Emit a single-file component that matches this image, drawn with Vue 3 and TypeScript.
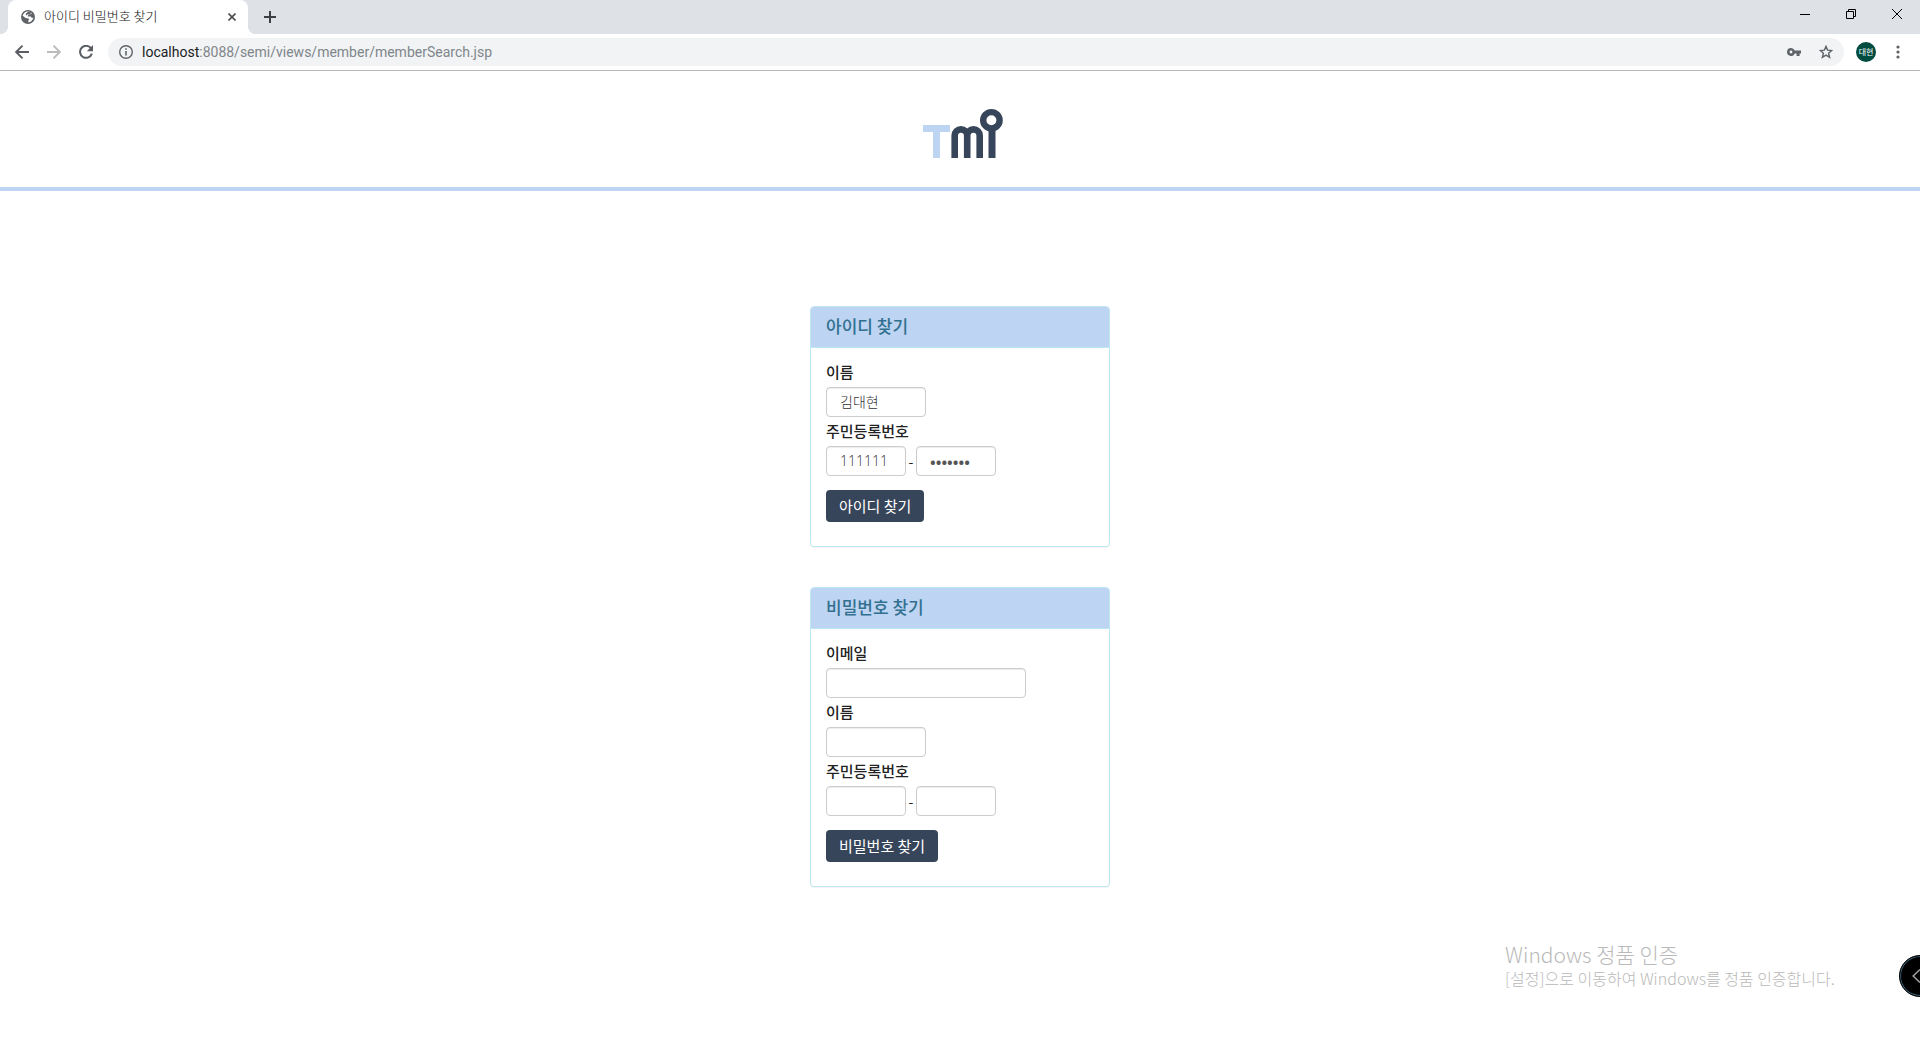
<script setup lang="ts">
import { ref } from 'vue'

const idForm = ref({ name: '김대현', front: '111111', back: '1111111' })
const pwForm = ref({ email: '', name: '', front: '', back: '' })
</script>

<template>
  <div class="window">
    <div class="tabstrip">
      <div class="tab">
        <svg class="globe" viewBox="0 0 14 14" aria-hidden="true">
          <circle cx="7" cy="7" r="7" fill="#5f6368" />
          <path d="M7.6 1.6C9 1.8 10 2.4 10.8 3.2L9.6 4.2L7.2 4.6L6.8 6.4L9.8 6.6L11 8.2L12.4 7.2C12.2 9.6 10.4 12 7.6 12.4L7.2 10.6L8.4 9.4L7.4 8.4L4.6 8L1.7 5.8C2.2 3.6 4 2 6 1.6Z" fill="#fff" />
          <path d="M1.6 7.4L4.6 9.4L5.2 12C3.2 11.4 1.8 9.6 1.6 7.4Z" fill="#5f6368" />
          <path d="M5.2 3.2L7.6 1.4L10.6 2.6L8.8 4.2L6.6 4.2L5.8 5.6L4.6 4.6Z" fill="#5f6368" />
        </svg>
        <span class="tab-title">아이디 비밀번호 찾기</span>
        <button class="icon-btn tab-close" type="button" aria-label="탭 닫기">
          <svg width="8" height="8" viewBox="0 0 8 8"><path d="M0.5 0.5L7.5 7.5M7.5 0.5L0.5 7.5" stroke="#4a4d51" stroke-width="1.6" /></svg>
        </button>
      </div>
      <button class="icon-btn new-tab" type="button" aria-label="새 탭">
        <svg width="12" height="12" viewBox="0 0 12 12"><path d="M6 0V12M0 6H12" stroke="#3c4043" stroke-width="2" /></svg>
      </button>
      <div class="win-controls">
        <button class="icon-btn win-btn" type="button" aria-label="최소화">
          <svg width="10" height="10" viewBox="0 0 10 10"><path d="M0 5.5H10" stroke="#000" /></svg>
        </button>
        <button class="icon-btn win-btn" type="button" aria-label="이전 크기로">
          <svg width="10" height="10" viewBox="0 0 10 10"><path d="M0.5 2.5H7.5V9.5H0.5ZM2.5 2.5V0.5H9.5V7.5H7.5" fill="none" stroke="#000" /></svg>
        </button>
        <button class="icon-btn win-btn" type="button" aria-label="닫기">
          <svg width="10" height="10" viewBox="0 0 10 10"><path d="M0 0L10 10M10 0L0 10" stroke="#000" /></svg>
        </button>
      </div>
    </div>

    <div class="toolbar">
      <button class="icon-btn tool" type="button" aria-label="뒤로">
        <svg width="14" height="14" viewBox="0 0 14 14"><path d="M14 7H1.5M7.5 0.7L1.2 7L7.5 13.3" fill="none" stroke="#5a5e63" stroke-width="1.9" /></svg>
      </button>
      <button class="icon-btn tool" type="button" aria-label="앞으로">
        <svg width="14" height="14" viewBox="0 0 14 14"><path d="M0 7H12.5M6.5 0.7L12.8 7L6.5 13.3" fill="none" stroke="#babcbe" stroke-width="1.9" /></svg>
      </button>
      <button class="icon-btn tool" type="button" aria-label="새로고침">
        <svg width="14" height="14" viewBox="0 0 14 14"><path d="M12 3.4A6 6 0 1 0 12.8 8.6" fill="none" stroke="#5a5e63" stroke-width="2" /><path d="M14 0V6.2H7.8Z" fill="#5a5e63" /></svg>
      </button>
      <div class="omnibox">
        <svg width="16" height="16" viewBox="0 0 16 16" aria-hidden="true">
          <circle cx="8" cy="8" r="6.3" fill="none" stroke="#5f6368" stroke-width="1.4" />
          <path d="M8 7V11.6M8 4.2V5.8" stroke="#5f6368" stroke-width="1.6" />
        </svg>
        <span class="url"><span class="host">localhost</span>:8088/semi/views/member/memberSearch.jsp</span>
        <button class="icon-btn tool" type="button" aria-label="비밀번호 관리">
          <svg width="14" height="8" viewBox="0 0 14 8"><path fill-rule="evenodd" d="M4 0A4 4 0 1 0 7.7 5.5H9.6V8H12.6V5.5H14V2.5H7.7A4 4 0 0 0 4 0ZM4 2.6A1.4 1.4 0 1 1 4 5.4A1.4 1.4 0 1 1 4 2.6Z" fill="#5f6368" /></svg>
        </button>
        <button class="icon-btn tool" type="button" aria-label="북마크">
          <svg width="14" height="14" viewBox="0 0 14 14"><path d="M7 1.4L8.6 5.1L12.7 5.5L9.6 8.2L10.6 12.3L7 10.1L3.4 12.3L4.4 8.2L1.3 5.5L5.4 5.1Z" fill="none" stroke="#5f6368" stroke-width="1.4" /></svg>
        </button>
      </div>
      <button class="icon-btn tool" type="button" aria-label="프로필"><span class="avatar">대현</span></button>
      <button class="icon-btn tool" type="button" aria-label="메뉴">
        <svg width="4" height="14" viewBox="0 0 4 14"><circle cx="2" cy="2" r="1.6" fill="#5f6368" /><circle cx="2" cy="7" r="1.6" fill="#5f6368" /><circle cx="2" cy="12" r="1.6" fill="#5f6368" /></svg>
      </button>
    </div>

    <header class="site-header">
      <svg class="logo" viewBox="0 0 86 50" role="img" aria-label="Tmi">
        <path d="M6 17H33V24H23V50H16V24H6Z" fill="#bdd4f2" />
        <path d="M37.7 50V27.6A6.25 6.25 0 0 1 50.2 27.6V50M50.2 27.6A6.25 6.25 0 0 1 62.7 27.6V50" fill="none" stroke="#37455a" stroke-width="6.6" />
        <path d="M75 22V50" stroke="#37455a" stroke-width="7" />
        <circle cx="74.4" cy="12.3" r="8.2" fill="#fff" stroke="#37455a" stroke-width="6.4" />
      </svg>
    </header>

    <main class="content">
      <section class="card">
        <h3 class="card-title">아이디 찾기</h3>
        <form class="card-body" @submit.prevent>
          <div class="field">
            <label for="id-name">이름</label>
            <input id="id-name" v-model="idForm.name" class="name" type="text">
          </div>
          <div class="field">
            <label for="id-front">주민등록번호</label>
            <div class="pair">
              <input id="id-front" v-model="idForm.front" class="part" type="text">
              <span class="dash">-</span>
              <input v-model="idForm.back" class="part" type="password" aria-label="주민등록번호 뒷자리">
            </div>
          </div>
          <button class="submit" type="submit">아이디 찾기</button>
        </form>
      </section>

      <section class="card">
        <h3 class="card-title">비밀번호 찾기</h3>
        <form class="card-body" @submit.prevent>
          <div class="field">
            <label for="pw-email">이메일</label>
            <input id="pw-email" v-model="pwForm.email" class="email" type="text">
          </div>
          <div class="field">
            <label for="pw-name">이름</label>
            <input id="pw-name" v-model="pwForm.name" class="name" type="text">
          </div>
          <div class="field">
            <label for="pw-front">주민등록번호</label>
            <div class="pair">
              <input id="pw-front" v-model="pwForm.front" class="part" type="text">
              <span class="dash">-</span>
              <input v-model="pwForm.back" class="part" type="password" aria-label="주민등록번호 뒷자리">
            </div>
          </div>
          <button class="submit" type="submit">비밀번호 찾기</button>
        </form>
      </section>
    </main>

    <aside class="activation">
      <p class="activation-title">Windows 정품 인증</p>
      <p class="activation-text">[설정]으로 이동하여 Windows를 정품 인증합니다.</p>
    </aside>
    <button class="side-handle" type="button" aria-label="패널 열기">
      <svg width="8" height="14" viewBox="0 0 8 14"><path d="M8 0.5L1.2 7L8 13.5" fill="none" stroke="#9a9a9a" stroke-width="1.6" /></svg>
    </button>
  </div>
</template>

<style>
body {
  margin: 0;
  background: #fff;
}
</style>

<style scoped>
.window {
  position: relative;
  min-height: 100vh;
  overflow: hidden;
  font-family: "Noto Sans CJK KR", sans-serif;
  color: #222;
}

.icon-btn {
  display: flex;
  align-items: center;
  justify-content: center;
  flex: none;
  padding: 0;
  border: 0;
  background: none;
}

.tabstrip {
  display: flex;
  align-items: flex-start;
  height: 34px;
  padding-left: 8px;
  background: #dee1e6;
}

.tab {
  position: relative;
  display: flex;
  align-items: center;
  box-sizing: border-box;
  width: 240px;
  height: 34px;
  padding: 0 8px 0 13px;
  border-radius: 8px 8px 0 0;
  background: #fff;
}

.tab::before,
.tab::after {
  content: "";
  position: absolute;
  bottom: 0;
  width: 8px;
  height: 8px;
}

.tab::before {
  right: 100%;
  background: radial-gradient(circle at 0 0, transparent 8px, #fff 8px);
}

.tab::after {
  left: 100%;
  background: radial-gradient(circle at 100% 0, transparent 8px, #fff 8px);
}

.globe {
  flex: none;
  width: 14px;
  height: 14px;
}

.tab-title {
  flex: 1;
  margin-left: 9px;
  padding-bottom: 2px;
  font-size: 13px;
  line-height: 18px;
  font-weight: 300;
  color: #111;
  white-space: nowrap;
}

.tab-close {
  width: 16px;
  height: 16px;
}

.new-tab {
  width: 28px;
  height: 34px;
  margin-left: 8px;
}

.win-controls {
  display: flex;
  margin-left: auto;
}

.win-btn {
  width: 46px;
  height: 28px;
}

.toolbar {
  display: flex;
  align-items: center;
  height: 36px;
  padding: 0 6px;
  border-bottom: 1px solid #b6b6b6;
}

.tool {
  width: 32px;
  height: 28px;
}

.omnibox {
  display: flex;
  flex: 1;
  align-items: center;
  height: 28px;
  margin: 0 6px;
  padding: 0 2px 0 10px;
  border-radius: 14px;
  background: #f1f3f4;
}

.url {
  flex: 1;
  margin-left: 8px;
  font-family: Roboto, sans-serif;
  font-size: 14px;
  line-height: 20px;
  color: #80868b;
}

.host {
  color: #202124;
}

.avatar {
  width: 20px;
  height: 20px;
  border-radius: 50%;
  background: #004d40;
  color: #fff;
  font-family: "Noto Sans CJK KR", sans-serif;
  font-size: 8px;
  line-height: 20px;
  text-align: center;
}

.site-header {
  display: flex;
  justify-content: center;
  padding: 37px 0 29px;
  border-bottom: 4px solid #bdd4f2;
}

.logo {
  width: 86px;
  height: 50px;
}

.content {
  display: flex;
  flex-direction: column;
  align-items: center;
  gap: 40px;
  padding: 115px 0 40px;
}

.card {
  box-sizing: border-box;
  width: 300px;
  border: 1px solid #bce8f1;
  border-radius: 4px;
  background: #fff;
  box-shadow: 0 1px 1px rgba(0, 0, 0, 0.05);
}

.card-title {
  margin: 0;
  padding: 9px 15px 11px;
  border-bottom: 1px solid #bce8f1;
  border-radius: 3px 3px 0 0;
  background: #bdd4f2;
  color: #31708f;
  font-size: 17px;
  line-height: 20px;
  font-weight: 500;
}

.card-body {
  padding: 15px 15px 24px;
}

.field {
  display: flex;
  flex-direction: column;
  align-items: flex-start;
  gap: 7px;
  margin-bottom: 5px;
}

label {
  font-size: 15px;
  line-height: 17px;
  font-weight: 500;
}

input {
  box-sizing: border-box;
  height: 30px;
  padding: 4px 13px 6px;
  border: 1px solid #ccc;
  border-radius: 4px;
  background: #fff;
  box-shadow: inset 0 1px 1px rgba(0, 0, 0, 0.075);
  color: #333;
  font-family: "Open Sans", "Noto Sans CJK KR", sans-serif;
  font-size: 14px;
  line-height: 18px;
  font-weight: 300;
}

input[type="password"] {
  color: #555;
  font-family: "Noto Sans CJK KR", sans-serif;
  font-size: 18px;
}

.name {
  width: 100px;
}

.email {
  width: 200px;
}

.part {
  width: 80px;
}

.pair {
  display: flex;
  align-items: center;
}

.dash {
  width: 10px;
  font-size: 14px;
  line-height: 20px;
  text-align: center;
}

.submit {
  height: 32px;
  margin-top: 9px;
  padding: 0 13px;
  border: 0;
  border-radius: 4px;
  background: #37455a;
  color: #fff;
  font-family: "Noto Sans CJK KR", sans-serif;
  font-size: 15px;
  line-height: 20px;
}

.activation {
  position: absolute;
  right: 79px;
  bottom: 51px;
  width: 336px;
  color: #b9b9b9;
  font-weight: 300;
  white-space: nowrap;
}

.activation p {
  margin: 0;
}

.activation-title {
  font-size: 21px;
  line-height: 28px;
}

.activation-text {
  font-size: 16px;
  line-height: 21px;
}

.side-handle {
  position: absolute;
  right: -21px;
  bottom: 43px;
  display: flex;
  align-items: center;
  box-sizing: border-box;
  width: 42px;
  height: 42px;
  padding: 0 0 0 12px;
  border: 1px solid #000;
  border-radius: 50%;
  background: #000;
  box-shadow: inset 0 0 0 1px #3c6274;
}
</style>
